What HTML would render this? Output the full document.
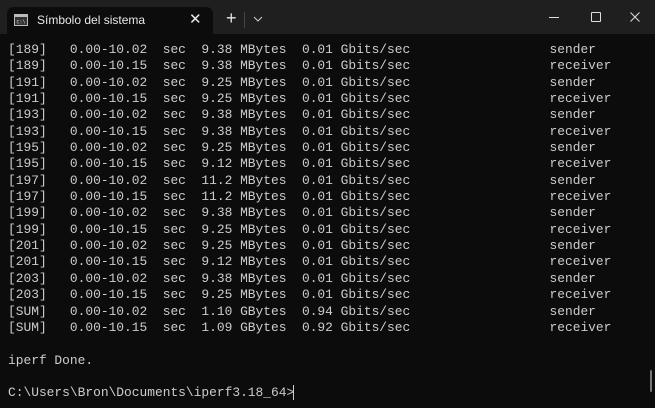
<!DOCTYPE html>
<html><head><style>
html,body{margin:0;padding:0;background:#0c0c0c;width:655px;height:408px;overflow:hidden}
.bar{position:absolute;left:0;top:0;width:655px;height:34px;background:#1f1f1f}
.tab{position:absolute;left:7px;top:7px;width:206px;height:27px;background:#0c0c0c;border-radius:7px 7px 0 0}
.t{position:absolute;font-family:"Liberation Sans",sans-serif;font-size:12px;color:#e8e8e8}
pre{position:absolute;left:8px;top:42px;margin:0;font-family:"Liberation Mono",monospace;font-size:12.9px;line-height:16.35px;color:#cccccc}
</style></head><body>
<div class="bar"></div>
<div class="tab"></div>
<svg style="position:absolute;left:14px;top:14px" width="14" height="12"><rect x="0.5" y="0.5" width="13" height="11" fill="#333" stroke="#bbb"/><rect x="1" y="1" width="12" height="2" fill="#bbb"/><text x="2.5" y="9.5" font-size="5" fill="#ddd" font-family="Liberation Mono">C:\</text></svg>
<div class="t" style="left:37px;top:13px">Símbolo del sistema</div>
<div class="t" style="left:189px;top:10px;font-size:15px">✕</div>
<div class="t" style="left:226px;top:8px;font-size:18px;font-weight:300">+</div>
<div style="position:absolute;left:244px;top:12px;width:1px;height:16px;background:#444"></div>
<svg style="position:absolute;left:253px;top:16px" width="10" height="6"><path d="M1 1 L5 5 L9 1" stroke="#ccc" fill="none"/></svg>
<div style="position:absolute;left:549px;top:17px;width:10px;height:1px;background:#ddd"></div>
<div style="position:absolute;left:591px;top:12px;width:8px;height:8px;border:1px solid #ddd;border-radius:1px"></div>
<svg style="position:absolute;left:630px;top:12px" width="10" height="10"><path d="M0.5 0.5 L9.5 9.5 M9.5 0.5 L0.5 9.5" stroke="#ddd"/></svg>
<pre>[189]   0.00-10.02  sec  9.38 MBytes  0.01 Gbits/sec                  sender
[189]   0.00-10.15  sec  9.38 MBytes  0.01 Gbits/sec                  receiver
[191]   0.00-10.02  sec  9.25 MBytes  0.01 Gbits/sec                  sender
[191]   0.00-10.15  sec  9.25 MBytes  0.01 Gbits/sec                  receiver
[193]   0.00-10.02  sec  9.38 MBytes  0.01 Gbits/sec                  sender
[193]   0.00-10.15  sec  9.38 MBytes  0.01 Gbits/sec                  receiver
[195]   0.00-10.02  sec  9.25 MBytes  0.01 Gbits/sec                  sender
[195]   0.00-10.15  sec  9.12 MBytes  0.01 Gbits/sec                  receiver
[197]   0.00-10.02  sec  11.2 MBytes  0.01 Gbits/sec                  sender
[197]   0.00-10.15  sec  11.2 MBytes  0.01 Gbits/sec                  receiver
[199]   0.00-10.02  sec  9.38 MBytes  0.01 Gbits/sec                  sender
[199]   0.00-10.15  sec  9.25 MBytes  0.01 Gbits/sec                  receiver
[201]   0.00-10.02  sec  9.25 MBytes  0.01 Gbits/sec                  sender
[201]   0.00-10.15  sec  9.12 MBytes  0.01 Gbits/sec                  receiver
[203]   0.00-10.02  sec  9.38 MBytes  0.01 Gbits/sec                  sender
[203]   0.00-10.15  sec  9.25 MBytes  0.01 Gbits/sec                  receiver
[SUM]   0.00-10.02  sec  1.10 GBytes  0.94 Gbits/sec                  sender
[SUM]   0.00-10.15  sec  1.09 GBytes  0.92 Gbits/sec                  receiver

iperf Done.

C:\Users\Bron\Documents\iperf3.18_64></pre>
<div style="position:absolute;left:293px;top:385px;width:1px;height:15px;background:#ccc"></div>
<div style="position:absolute;left:650px;top:370px;width:2px;height:22px;background:#777;border-radius:1px"></div>
</body></html>
